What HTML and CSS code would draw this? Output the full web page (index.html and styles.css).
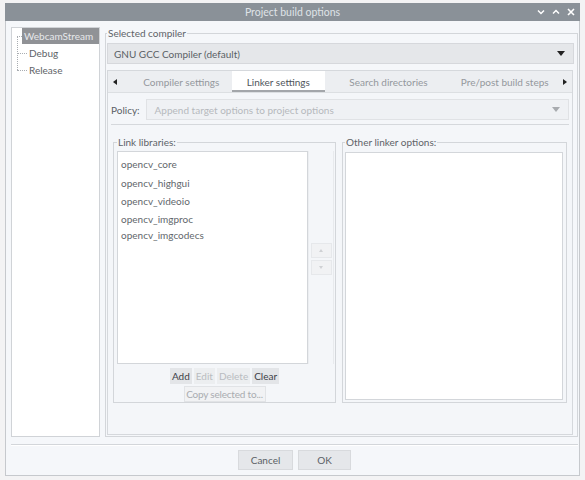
FILE: index.html
```html
<!DOCTYPE html>
<html>
<head>
<meta charset="utf-8">
<link rel="stylesheet" href="styles.css">
</head>
<body>
<div class="window">
  <div class="titlebar">
    <span></span>
    <span class="title">Project build options</span>
    <div class="wbtns">
      <svg width="8" height="6" viewBox="0 0 8 6"><path d="M1 1.5 L4 4.5 L7 1.5" fill="none" stroke="#fff" stroke-width="1.5"/></svg>
      <svg width="8" height="6" viewBox="0 0 8 6"><path d="M1 4.5 L4 1.5 L7 4.5" fill="none" stroke="#fff" stroke-width="1.5"/></svg>
      <svg width="8" height="8" viewBox="0 0 8 8"><path d="M1 1 L7 7 M7 1 L1 7" fill="none" stroke="#fff" stroke-width="1.6"/></svg>
    </div>
  </div>
  <div class="content">
    <div class="main">
      <div class="tree">
        <div class="node root"><span class="sel">WebcamStream</span></div>
        <div class="node child">Debug</div>
        <div class="node child">Release</div>
      </div>
      <fieldset class="group compiler-group">
        <legend>Selected compiler</legend>
        <div class="combo">
          <span>GNU GCC Compiler (default)</span>
          <span class="darr"></span>
        </div>
        <div class="tabs">
          <div class="tabbar">
            <span class="tabarrow"><span class="larr"></span></span>
            <span class="tab t1">Compiler settings</span>
            <span class="tab t2 active">Linker settings</span>
            <span class="tab t3">Search directories</span>
            <span class="tab t4">Pre/post build steps</span>
            <span class="tabarrow"><span class="rarr"></span></span>
          </div>
          <div class="tabpane">
            <div class="policy-row">
              <span class="policy-label">Policy:</span>
              <div class="combo disabled">
                <span>Append target options to project options</span>
                <span class="darr light"></span>
              </div>
            </div>
            <div class="sep"></div>
            <div class="cols">
              <fieldset class="group libs">
                <legend>Link libraries:</legend>
                <div class="libs-row">
                  <div class="list">
                    <div class="item">opencv_core</div>
                    <div class="item">opencv_highgui</div>
                    <div class="item">opencv_videoio</div>
                    <div class="item i4">opencv_imgproc</div>
                    <div class="item i5">opencv_imgcodecs</div>
                  </div>
                  <div class="updown">
                    <div class="ud-btn"><span class="mini-up"></span></div>
                    <div class="ud-btn"><span class="mini-dn"></span></div>
                  </div>
                </div>
                <div class="btnrow">
                  <span class="sbtn">Add</span>
                  <span class="sbtn off">Edit</span>
                  <span class="sbtn off">Delete</span>
                  <span class="sbtn">Clear</span>
                </div>
                <div class="btnrow copyrow">
                  <span class="copybtn">Copy selected to...</span>
                </div>
              </fieldset>
              <fieldset class="group other">
                <legend>Other linker options:</legend>
                <div class="textarea"></div>
              </fieldset>
            </div>
          </div>
        </div>
      </fieldset>
    </div>
    <div class="bottom-sep"></div>
    <div class="footer">
      <span class="btn cancel">Cancel</span>
      <span class="btn ok">OK</span>
    </div>
  </div>
</div>
</body>
</html>
```

FILE: styles.css
```css
* { box-sizing: border-box; }
body {
  margin: 0;
  background: #f3f3f4;
  font-family: Lato, "Open Sans", "DejaVu Sans", sans-serif;
  font-size: 10px;
  color: #5e6368;
}
.window {
  margin: 3px 0 0 5px;
  width: 575px;
  height: 473px;
  background: #f5f7fa;
  border: 1px solid #c6c9cd;
  border-top: none;
  display: flex;
  flex-direction: column;
}
.titlebar {
  height: 18px;
  background: #8a9198;
  display: grid;
  grid-template-columns: 1fr auto 1fr;
  align-items: center;
  margin: 0 -1px;
}
.title {
  color: #dfe3e7;
  font-size: 10.5px;
}
.wbtns {
  justify-self: end;
  display: flex;
  align-items: center;
  gap: 7px;
  padding-right: 5px;
}
.wbtns svg { display: block; }
.content {
  flex: 1;
  display: flex;
  flex-direction: column;
  padding: 6px 1px 0 5px;
}
.main {
  display: flex;
  gap: 5px;
  height: 410px;
}
.tree {
  width: 89px;
  background: #fff;
  border: 1px solid #d0d3d7;
  padding-left: 10px;
}
.node {
  height: 17px;
  line-height: 17px;
  position: relative;
  white-space: nowrap;
}
.root .sel {
  display: inline-block;
  height: 16px;
  line-height: 16px;
  width: 77px;
  padding: 0 2px;
  background: #909296;
  color: #e6e8eb;
}
.root::before {
  content: "";
  position: absolute;
  left: -5px;
  top: 8px;
  width: 5px;
  border-top: 1px dotted #a9adb2;
}
.root::after {
  content: "";
  position: absolute;
  left: -5px;
  top: 8px;
  height: 34px;
  border-left: 1px dotted #a9adb2;
}
.child { padding-left: 7px; }
.child::before {
  content: "";
  position: absolute;
  left: -5px;
  top: 8px;
  width: 10px;
  border-top: 1px dotted #a9adb2;
}
.group {
  margin: 0;
  border: 1px solid #d3d6da;
  min-width: 0;
}
.group legend {
  padding: 0 1px;
  margin-left: 0;
  line-height: 12px;
  color: #5e6368;
}
.compiler-group {
  flex: 1;
  padding: 0 3px 1px 1px;
  display: flex;
  flex-direction: column;
}
.combo {
  margin-top: 4px;
  height: 21px;
  background: #e5e7ea;
  border: 1px solid #d6d8dc;
  padding: 0 8px 0 6px;
  display: flex;
  align-items: center;
  justify-content: space-between;
  color: #5a5f65;
}
.darr {
  width: 0;
  height: 0;
  border-left: 4px solid transparent;
  border-right: 4px solid transparent;
  border-top: 5px solid #222;
}
.darr.light { border-top-color: #a8abaf; }
.tabs {
  margin-top: 6px;
  margin-right: 1px;
  flex: 1;
  display: flex;
  flex-direction: column;
  border: 1px solid #d5d8dc;
  background: #f4f6f9;
}
.tabbar {
  height: 22px;
  display: flex;
  align-items: stretch;
  background: #eceef1;
  border-bottom: 1px solid #dcdfe2;
}
.tabarrow {
  width: 15px;
  display: flex;
  align-items: center;
  justify-content: center;
}
.larr, .rarr {
  width: 0;
  height: 0;
  border-top: 3.5px solid transparent;
  border-bottom: 3.5px solid transparent;
}
.larr { border-right: 4px solid #222; }
.rarr { border-left: 4px solid #222; }
.tab {
  display: flex;
  align-items: center;
  justify-content: center;
  color: #94989d;
  white-space: nowrap;
}
.t1 { width: 110px; padding-left: 8px; }
.t2 { width: 94px; }
.t3 { width: 129px; }
.t4 { width: 106px; }
.tab.active {
  background: #fff;
  color: #50555b;
  border-bottom: 2px solid #a3a6aa;
  padding-top: 2px;
}
.tabpane {
  flex: 1;
  padding: 6px 3px 0 3px;
  display: flex;
  flex-direction: column;
}
.policy-row {
  display: flex;
  align-items: center;
  gap: 6px;
}
.policy-label { color: #5a5f65; }
.policy-row .combo {
  flex: 1;
  margin-top: 0;
  background: #eff1f4;
  border-color: #e0e2e5;
  color: #b6b9bd;
  padding-left: 8px;
}
.sep {
  margin-top: 4px;
  border-top: 1px solid #d5d8dc;
}
.cols {
  margin-top: 11px;
  padding: 0 2px;
  display: flex;
  gap: 6px;
  height: 267px;
}
.libs, .other {
  flex: 1;
  padding: 0 0 0 3px;
  display: flex;
  flex-direction: column;
}
.libs-row {
  margin-top: 3px;
  display: flex;
  height: 214px;
}
.list {
  width: 191px;
  background: #fff;
  border: 1px solid #d3d6da;
  padding: 3px 0 0 3px;
  color: #62676c;
}
.item { height: 18.5px; line-height: 18.5px; }
.item.i4, .item.i5 { height: 16px; line-height: 16px; }
.updown {
  flex: 1;
  display: flex;
  flex-direction: column;
  justify-content: center;
  align-items: center;
  gap: 2px;
  border-left: 1px solid #eceef1;
  border-right: 1px solid #e8eaed;
  margin-right: 1px;
  padding-top: 2px;
}
.ud-btn {
  width: 21px;
  height: 15px;
  border: 1px solid #e6e8eb;
  background: #f1f2f4;
  display: flex;
  align-items: center;
  justify-content: center;
}
.mini-up, .mini-dn {
  width: 0;
  height: 0;
  border-left: 2.5px solid transparent;
  border-right: 2.5px solid transparent;
}
.mini-up { border-bottom: 3px solid #cfd1d4; }
.mini-dn { border-top: 3px solid #cfd1d4; }
.btnrow {
  margin-top: 4px;
  display: flex;
  justify-content: center;
  gap: 2px;
  padding-right: 3px;
}
.sbtn {
  height: 16px;
  line-height: 16px;
  padding: 0 2px;
  background: #e3e5e8;
  color: #3c4046;
}
.sbtn.off { color: #b9bcc0; background: #eceef0; }
.copyrow { margin-top: 2px; }
.copybtn {
  width: 82px;
  height: 16px;
  line-height: 14px;
  text-align: center;
  white-space: nowrap;
  letter-spacing: -0.2px;
  border: 1px solid #e1e3e6;
  background: #f1f2f4;
  color: #a9acb0;
}
.other { padding: 0 3px 2px 2px; }
.textarea {
  margin-top: 4px;
  flex: 1;
  background: #fff;
  border: 1px solid #d3d6da;
}
.bottom-sep {
  margin-top: 7px;
  border-top: 1px solid #d3d6da;
  border-bottom: 1px solid #fff;
}
.footer {
  margin-top: 4px;
  display: flex;
  justify-content: center;
  gap: 5px;
}
.btn {
  height: 20px;
  line-height: 18px;
  text-align: center;
  background: #e5e7ea;
  border: 1px solid #d8dadd;
  color: #5a5f65;
}
.cancel { width: 55px; }
.ok { width: 53px; }
```
